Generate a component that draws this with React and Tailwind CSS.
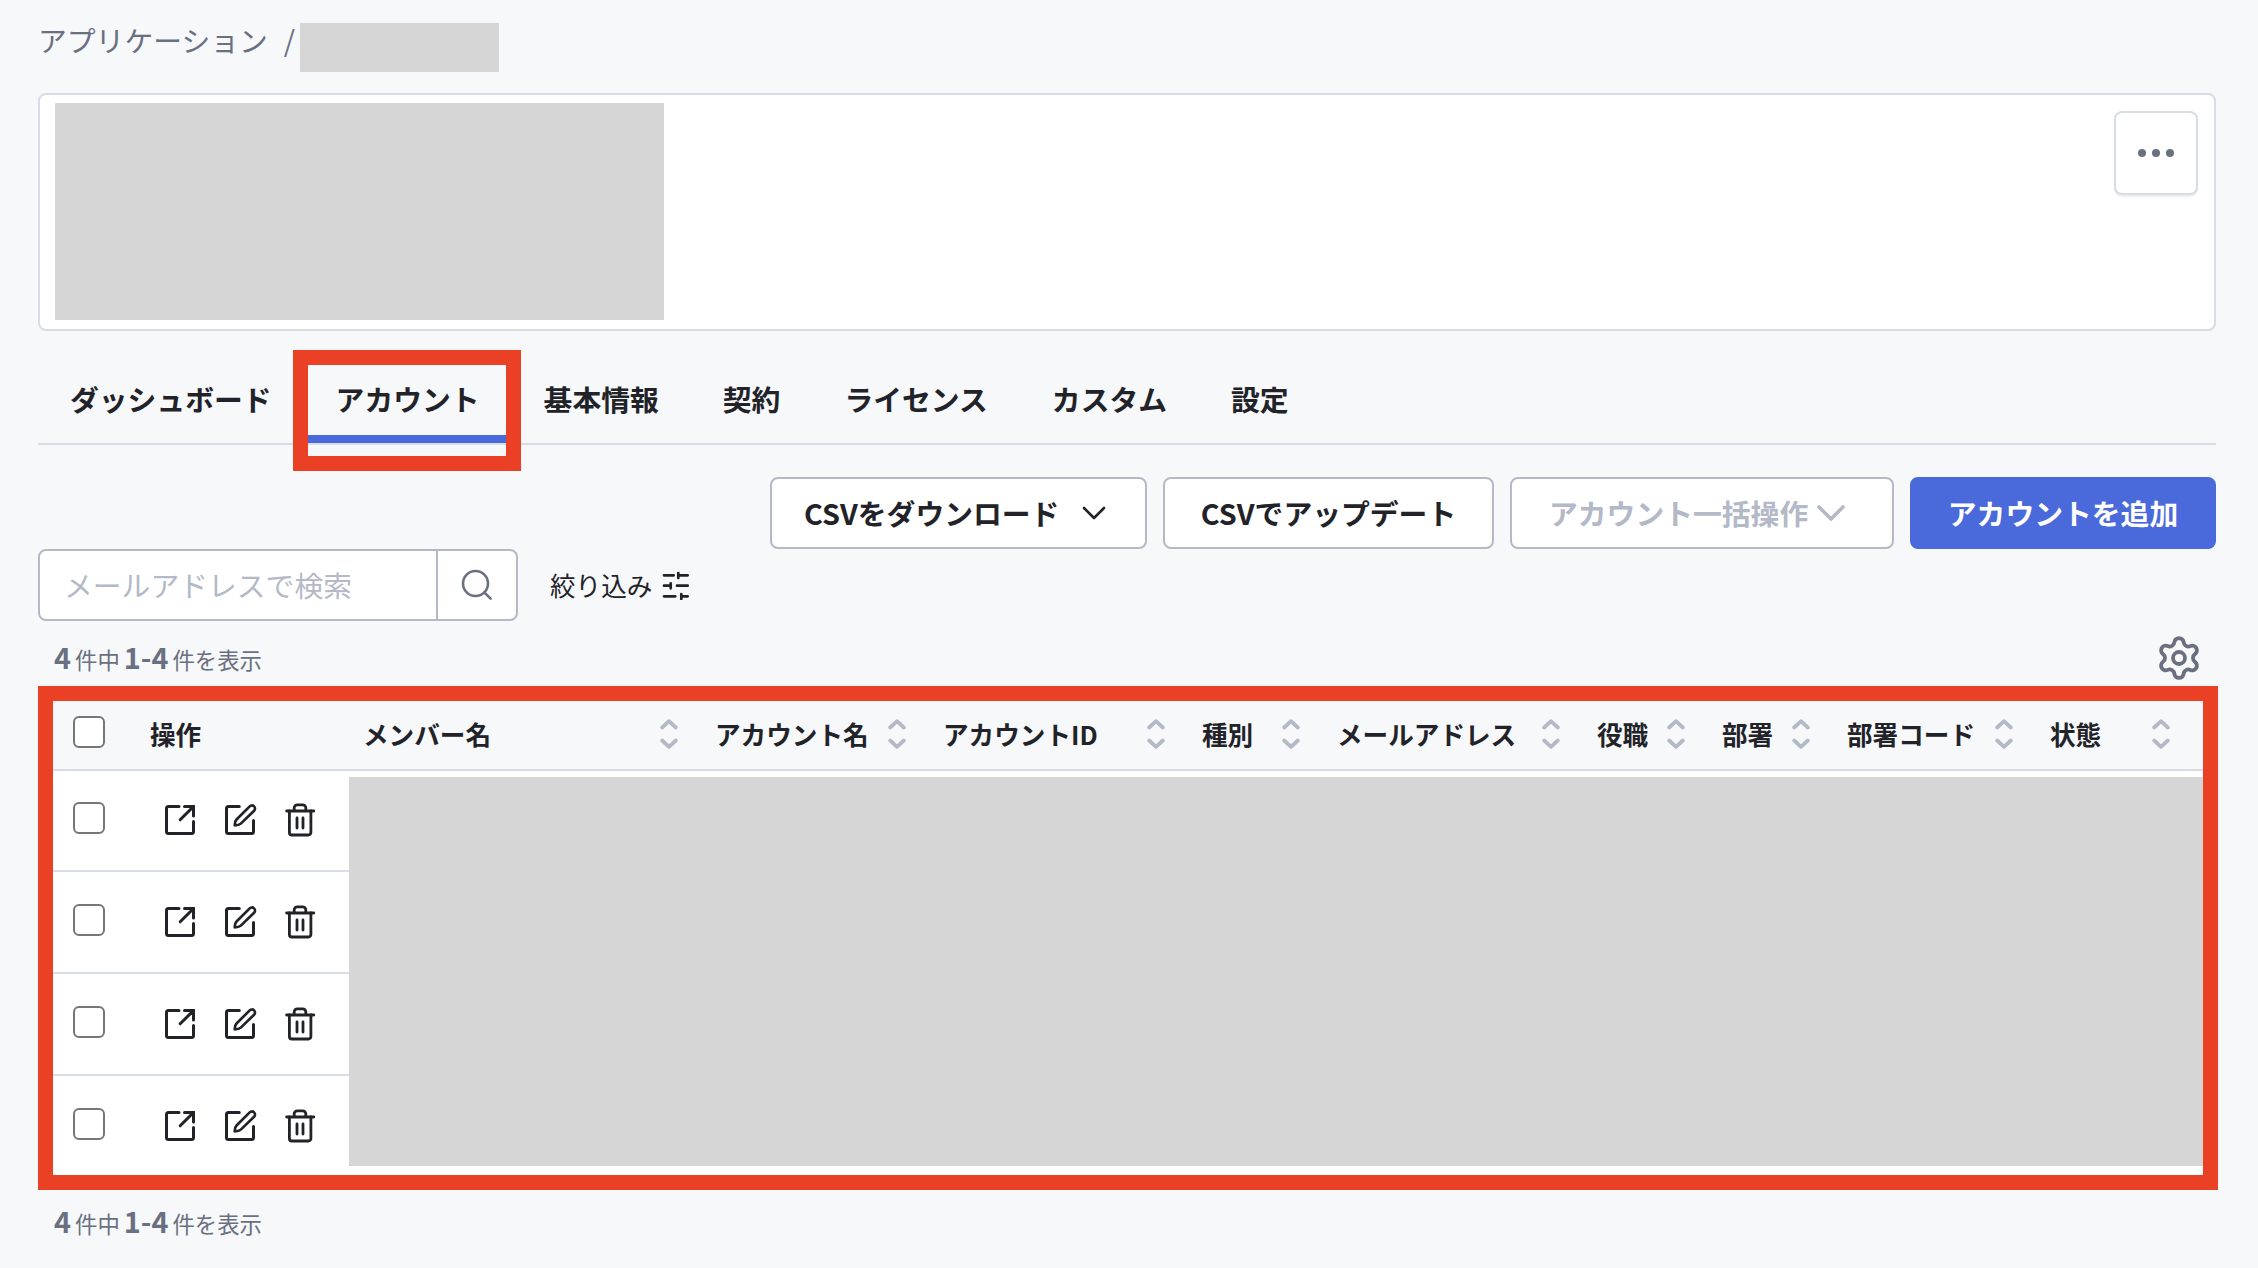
import React from 'react';
import { Settings } from 'lucide-react';

const tabs = ['ダッシュボード', 'アカウント', '基本情報', '契約', 'ライセンス', 'カスタム', '設定'];

const columns = [
  { label: 'メンバー名', width: 'w-[352px]' },
  { label: 'アカウント名', width: 'w-[228px]' },
  { label: 'アカウントID', width: 'w-[259px]' },
  { label: '種別', width: 'w-[135px]' },
  { label: 'メールアドレス', width: 'w-[260px]' },
  { label: '役職', width: 'w-[125px]' },
  { label: '部署', width: 'w-[125px]' },
  { label: '部署コード', width: 'w-[203px]' },
  { label: '状態', width: 'w-[157px]' },
];

const rowHeights = ['h-[101px]', 'h-[102px]', 'h-[102px]', 'h-[102px]'];

function Icon({ className, stroke = 3, viewBox = '0 0 36 36', children }) {
  return (
    <svg
      className={className}
      viewBox={viewBox}
      fill="none"
      stroke="currentColor"
      strokeWidth={stroke}
      strokeLinecap="round"
      strokeLinejoin="round"
    >
      {children}
    </svg>
  );
}

function SortIcon() {
  return (
    <Icon className="h-[30px] w-[18px] text-[#b3b9c7]" viewBox="0 0 18 30" stroke={3.8}>
      <path d="M2.2 8.5 9 2.2l6.8 6.3M2.2 21.5 9 27.8l6.8-6.3" />
    </Icon>
  );
}

function Checkbox() {
  return <span className="block size-8 rounded-[6px] border-2 border-[#767676] bg-white" />;
}

function RowActions() {
  return (
    <div className="flex gap-6">
      {/* Open */}
      <Icon className="size-9">
        <path d="M17 4.5H6.5a2 2 0 0 0-2 2v23a2 2 0 0 0 2 2h23a2 2 0 0 0 2-2V19.5" />
        <path d="M22.5 4.5h9V14M31.5 4.5 18.2 17.8" strokeLinejoin="miter" />
      </Icon>
      {/* Edit */}
      <Icon className="size-9">
        <path d="M17.3 4.5H6.5a2 2 0 0 0-2 2v23a2 2 0 0 0 2 2h23a2 2 0 0 0 2-2v-11" />
        <path
          d="M12.7 23.3C12.7 20.5 13 19 14.5 17.5L27.7 4.4a3 3 0 0 1 4.4 4.3L18.8 21.6C17.3 23 15.5 23.3 12.7 23.3z"
          strokeWidth="2.7"
        />
      </Icon>
      {/* Delete */}
      <Icon className="size-9" stroke={2.8}>
        <path d="M4.6 9h27.2M12.2 9V5.8a3 3 0 0 1 3-3h5.6a3 3 0 0 1 3 3V9" />
        <path d="M7.4 9v21.5a2.5 2.5 0 0 0 2.5 2.5h16.5a2.5 2.5 0 0 0 2.5-2.5V9" />
        <path d="M15 16v10M21 16v10" />
      </Icon>
    </div>
  );
}

function ResultCount() {
  return (
    <p className="flex h-9 items-baseline pl-4 text-[22.4px] leading-9 text-[#6a7080]">
      <b className="mr-[4px] text-[28.8px]">4</b>件中
      <b className="mr-[4px] ml-[4px] text-[28.8px]">1-4</b>件を表示
    </p>
  );
}

function Button({ className = '', primary, children }) {
  const colors = primary ? 'border-[#4a69da] bg-[#4a69da] text-white' : 'border-[#b3b9c7] bg-white';
  return (
    <button className={`flex h-[72px] items-center rounded-lg border-2 font-bold whitespace-nowrap ${colors} ${className}`}>
      {children}
    </button>
  );
}

export default function App() {
  return (
    <div className="h-[1268px] w-[2258px] overflow-hidden bg-[#f7f8fa] pr-[42px] pl-[38px] font-['Noto_Sans_CJK_JP',sans-serif] text-[28.8px] text-[#222329]">
      {/* Breadcrumb */}
      <div className="flex h-[93px] items-start pt-[23px] leading-9 text-[#6a7080]">
        <span className="-mt-px">アプリケーション</span>
        <span className="-mt-px ml-4">/</span>
        <span className="ml-[5px] h-[49px] w-[199px] bg-[#d6d6d6]" />
      </div>

      {/* Application card */}
      <div className="flex h-[238px] items-start justify-between rounded-lg border-2 border-[#d8dce6] bg-white pt-2 pl-[15px]">
        <div className="h-[217px] w-[609px] bg-[#d6d6d6]" />
        <button className="mt-2 mr-4 flex size-[84px] items-center justify-center gap-[6px] rounded-lg border-2 border-[#d8dce6] bg-white shadow-[0_2px_2px_rgba(0,0,0,0.08)]">
          <span className="size-2 rounded-full bg-[#6a7080]" />
          <span className="size-2 rounded-full bg-[#6a7080]" />
          <span className="size-2 rounded-full bg-[#6a7080]" />
        </button>
      </div>

      {/* Tabs */}
      <nav className="mt-6 flex h-[90px] border-b-2 border-[#d8dce6] font-bold">
        {tabs.map((tab) => (
          <div key={tab} className="relative flex h-[88px] items-center px-8">
            {tab}
            {tab === 'アカウント' && (
              <>
                <span className="absolute inset-x-0 bottom-0 h-2 bg-[#4a69da]" />
                <span className="absolute -top-[5px] -left-[11px] h-[121px] w-[228px] border-[15px] border-[#ea4026]" />
              </>
            )}
          </div>
        ))}
      </nav>

      {/* Account actions */}
      <div className="mt-8 flex justify-end gap-4">
        <Button className="w-[377px] justify-between pr-[39px] pl-8">
          CSVをダウンロード
          <Icon className="h-[14px] w-6" viewBox="0 0 24 14" stroke={2.6}>
            <path d="M2 2l10 10L22 2" />
          </Icon>
        </Button>
        <Button className="w-[331px] justify-center">CSVでアップデート</Button>
        <Button className="w-[384px] gap-[9px] pl-[37px]">
          <span className="text-[#b3b9c7]">アカウント一括操作</span>
          <Icon className="h-4 w-7 text-[#b3b9c7]" viewBox="0 0 28 16" stroke={3.6}>
            <path d="M2 2l12 12L26 2" />
          </Icon>
        </Button>
        <Button primary className="w-[306px] justify-center">アカウントを追加</Button>
      </div>

      {/* Search */}
      <div className="flex h-[72px] items-center">
        <div className="flex h-[72px] w-[480px] rounded-lg border-2 border-[#b3b9c7] bg-white">
          <div className="flex w-[398px] items-center border-r-2 border-[#b3b9c7] pl-6 text-[#b3b9c7]">
            メールアドレスで検索
          </div>
          <div className="flex flex-1 items-center justify-center text-[#6a7080]">
            <Icon className="size-9" stroke={2.6}>
              <circle cx="16.5" cy="16.5" r="12.5" />
              <path d="M25.3 25.3l6.3 6.3" />
            </Icon>
          </div>
        </div>
        <span className="ml-8 text-[25.6px]">絞り込み</span>
        <Icon className="ml-[9px] size-[30px]" viewBox="0 0 30 30" stroke={2.7}>
          <path d="M3 5.3h9.7M17.3 3v5M17.3 5.3h9.4" />
          <path d="M3 15.7h6.5M9.7 13.3v5M16 15.7h10.7" />
          <path d="M3 26.3h11.3M20.3 24v5M20.3 26.3h6.4" />
        </Icon>
      </div>

      <div className="flex h-[65px] items-start justify-between pt-[13px] pr-[13px]">
        <div className="pt-[5px]">
          <ResultCount />
        </div>
        <Settings className="size-12 text-[#6a7080]" strokeWidth={1.9} />
      </div>

      {/* Account table */}
      <section className="h-[504px] w-[2180px] border-[15px] border-[#ea4026] bg-white">
        <div className="flex h-[70px] items-center border-b-2 border-[#d8dce6] bg-[#f7f8fa] pb-[2px] pl-5 text-[25.6px] font-bold">
          <div className="w-[77px] shrink-0 pb-1">
            <Checkbox />
          </div>
          <div className="w-[213px] shrink-0">操作</div>
          {columns.map((column) => (
            <div key={column.label} className={`flex shrink-0 items-center justify-between pr-[37px] ${column.width}`}>
              {column.label}
              <SortIcon />
            </div>
          ))}
        </div>
        <div className="flex h-[404px] overflow-hidden">
          <div className="w-[296px] shrink-0">
            {rowHeights.map((height, i) => (
              <div key={i} className={`flex items-end border-b-2 border-[#d8dce6] pl-5 ${height}`}>
                <div className="pb-9">
                  <Checkbox />
                </div>
                <div className="ml-[57px] pb-8">
                  <RowActions />
                </div>
              </div>
            ))}
          </div>
          <div className="mt-[6px] h-[389px] flex-1 bg-[#d6d6d6]" />
        </div>
      </section>

      <div className="pt-[13px]">
        <ResultCount />
      </div>
    </div>
  );
}
